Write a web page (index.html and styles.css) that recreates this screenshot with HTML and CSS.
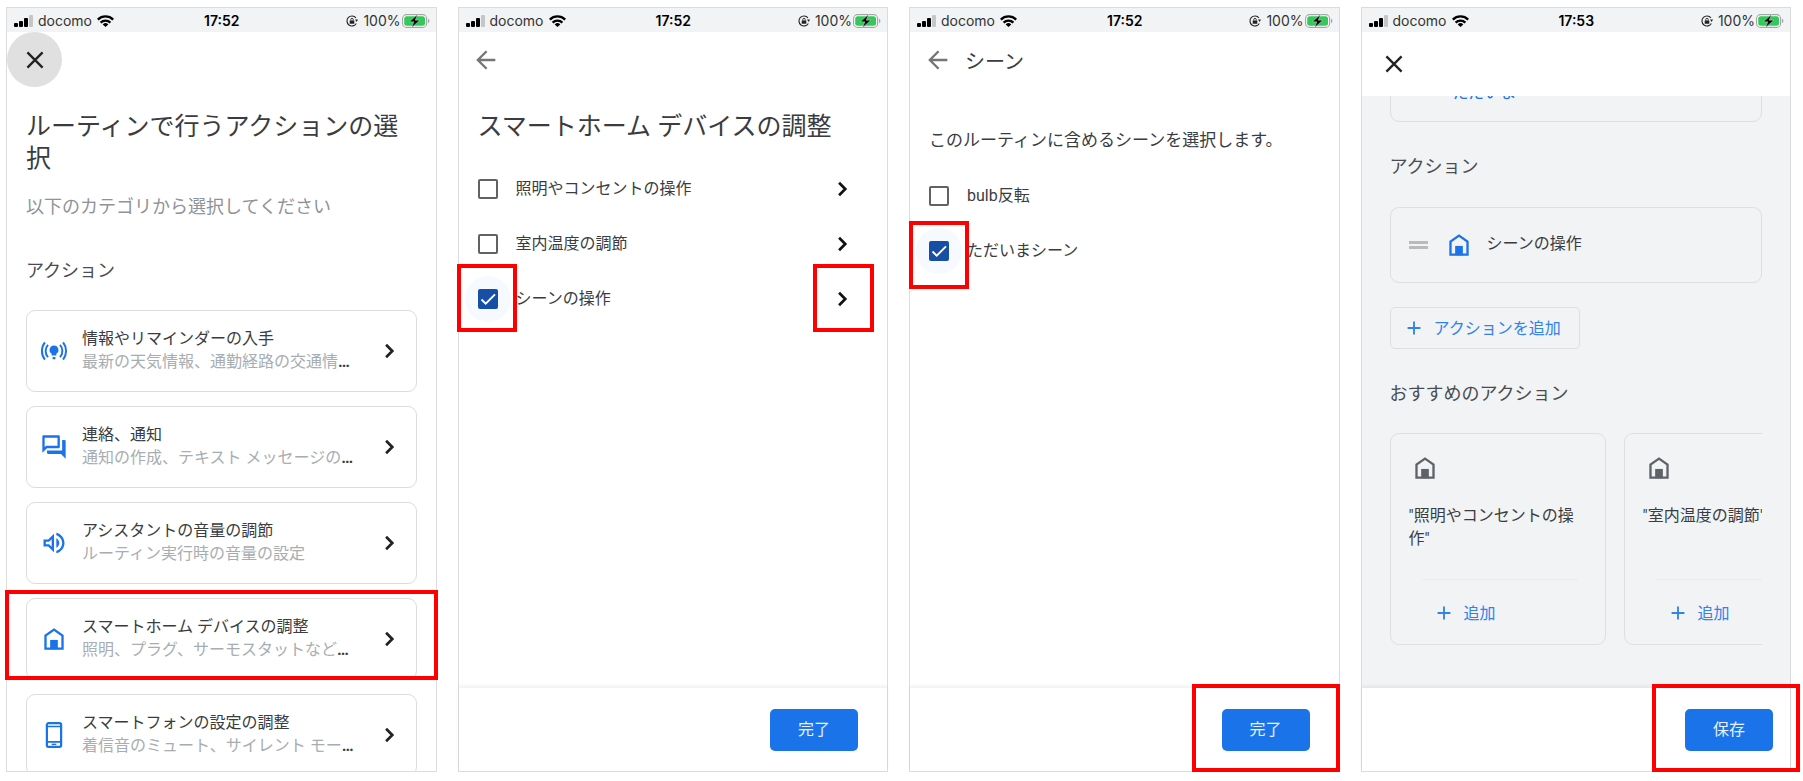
FILE: index.html
```html
<!DOCTYPE html>
<html lang="ja">
<head>
<meta charset="utf-8">
<title>ルーティンの設定</title>
<link rel="stylesheet" href="styles.css">
</head>
<body>
<svg class="defs" aria-hidden="true">
  <symbol id="signal" viewBox="0 0 19 12"><rect x="0" y="8" width="4" height="4" rx="1"/><rect x="5" y="6" width="4" height="6" rx="1"/><rect x="10" y="3" width="4" height="9" rx="1"/><rect x="15" y="0" width="4" height="12" rx="1" fill="#c4c6c8"/></symbol>
  <symbol id="wifi" viewBox="0 0 17 12"><g fill="none" stroke="#000" stroke-width="2.3"><path d="M.8 4.600a11 11 0 0 1 15.400 0"/><path d="M3.600 7.600a7 7 0 0 1 9.800 0"/></g><path d="M8.500 12 5.700 9.400a4 4 0 0 1 5.600 0z"/></symbol>
  <symbol id="lock" viewBox="0 0 12 12"><path d="M9.900 2.900A5 5 0 1 0 10.300 8.500" fill="none" stroke="#222" stroke-width="1.100"/><path d="M9 4.600h3L10.700 7z" fill="#222"/><rect x="3.700" y="5.400" width="4.600" height="3.400" rx=".4" fill="#222"/><path d="M4.800 5.600V4.500a1.200 1.200 0 0 1 2.400 0v1.100" fill="none" stroke="#222" stroke-width=".9"/></symbol>
  <symbol id="battery" viewBox="0 0 28 14"><rect x=".6" y=".6" width="24" height="12.800" rx="4" fill="#fff" stroke="#a3a5a7" stroke-width="1.100"/><rect x="2.200" y="2.200" width="20.800" height="9.600" rx="2.500" fill="#34c759"/><path d="M26 4.800a2.400 2.400 0 0 1 0 4.400z" fill="#a3a5a7"/><path d="M15.500.5 7.500 7.800h4.400L9.700 13.500l8-7.300h-4.500z" fill="#000" stroke="#f1f3f4" stroke-width=".4"/></symbol>
  <symbol id="close" viewBox="0 0 24 24"><path d="M5.500 5.500l13 13m0-13l-13 13" fill="none" stroke="currentColor" stroke-width="2"/></symbol>
  <symbol id="back" viewBox="0 0 24 24"><path d="M20 12H5m7.500-7.500L5 12l7.500 7.500" fill="none" stroke="currentColor" stroke-width="2"/></symbol>
  <symbol id="chevron" viewBox="0 0 24 24"><path d="M9.500 6.700 14.800 12l-5.300 5.300" fill="none" stroke="currentColor" stroke-width="2.300"/></symbol>
  <symbol id="plus" viewBox="0 0 24 24"><path d="M12 5v14M5 12h14" fill="none" stroke="currentColor" stroke-width="2"/></symbol>
  <symbol id="house" viewBox="0 0 24 24"><path d="M4.700 20.300V9L12 3.900 19.300 9v11.300z" fill="none" stroke="currentColor" stroke-width="2"/><path d="M8.700 12.800h6.600v8H8.700z" fill="currentColor"/></symbol>
  <symbol id="info" viewBox="0 0 24 24"><path d="M12 7.200a3.900 3.900 0 0 0-2 7.200v1.500h4v-1.500a3.900 3.900 0 0 0-2-7.200zM10.800 17.200h2.400v1.900h-2.400z" fill="currentColor"/><g fill="none" stroke="currentColor" stroke-width="1.700"><path d="M6.900 6.800a7.500 7.500 0 0 0 0 10.400M17.100 6.800a7.500 7.500 0 0 1 0 10.400M4.200 4.600a12 12 0 0 0 0 14.800M19.800 4.600a12 12 0 0 1 0 14.800"/></g></symbol>
  <symbol id="chat" viewBox="0 0 24 24"><path fill="currentColor" d="M15 4v7H5.170L4 12.170V4h11m1-2H3c-.55 0-1 .45-1 1v14l4-4h10c.55 0 1-.45 1-1V3c0-.55-.45-1-1-1zm5 4h-2v9H6v2c0 .55.45 1 1 1h11l4 4V7c0-.55-.45-1-1-1z"/></symbol>
  <symbol id="volume" viewBox="0 0 24 24"><path fill="currentColor" d="M3 9v6h4l5 5V4L7 9H3zm7-.17v6.340L7.830 13H5v-2h2.830L10 8.830zM16.500 12c0-1.770-1.020-3.290-2.500-4.030v8.050c1.480-.73 2.500-2.250 2.500-4.020zM14 3.230v2.060c2.890.86 5 3.540 5 6.710s-2.110 5.850-5 6.710v2.060c4.010-.91 7-4.490 7-8.770s-2.990-7.860-7-8.770z"/></symbol>
  <symbol id="mobile" viewBox="0 0 24 24"><rect x="5.900" y="1.900" width="12.200" height="20.200" rx="1.400" fill="none" stroke="currentColor" stroke-width="1.900"/><path d="M6 4.700h12M6 17.900h12" stroke="currentColor" stroke-width="1.400"/><path d="M10 20h4" stroke="currentColor" stroke-width="1.200"/></symbol>
  <symbol id="check" viewBox="0 0 20 20"><path d="M3.500 10.500l4.200 4.200L17 5.300" fill="none" stroke="#fff" stroke-width="1.900"/></symbol>
</svg>

<main class="phones">
  <section class="phone">
    <div class="status">
      <span class="carrier"><svg class="signal"><use href="#signal"/></svg>docomo<svg class="wifi"><use href="#wifi"/></svg></span>
      <time>17:52</time>
      <span class="power"><svg class="lock"><use href="#lock"/></svg><span>100%</span><svg class="battery"><use href="#battery"/></svg></span>
    </div>
    <header class="bar"><button class="nav pressed" aria-label="閉じる"><svg class="icon"><use href="#close"/></svg></button></header>
    <div class="content">
      <h1>ルーティンで行うアクションの選択</h1>
      <p class="lead">以下のカテゴリから選択してください</p>
      <h2>アクション</h2>
      <div class="cards">
        <button class="card"><svg class="icon"><use href="#info"/></svg><span class="words"><span class="name">情報やリマインダーの入手</span><span class="desc"><span>最新の天気情報、通勤経路の交通情報など</span></span></span><svg class="icon go"><use href="#chevron"/></svg></button>
        <button class="card"><svg class="icon"><use href="#chat"/></svg><span class="words"><span class="name">連絡、通知</span><span class="desc"><span>通知の作成、テキスト メッセージの送信など</span></span></span><svg class="icon go"><use href="#chevron"/></svg></button>
        <button class="card"><svg class="icon"><use href="#volume"/></svg><span class="words"><span class="name">アシスタントの音量の調節</span><span class="desc"><span>ルーティン実行時の音量の設定</span></span></span><svg class="icon go"><use href="#chevron"/></svg></button>
        <div class="marked">
          <button class="card"><svg class="icon"><use href="#house"/></svg><span class="words"><span class="name">スマートホーム デバイスの調整</span><span class="desc"><span>照明、プラグ、サーモスタットなどの調整</span></span></span><svg class="icon go"><use href="#chevron"/></svg></button>
        </div>
        <button class="card"><svg class="icon"><use href="#mobile"/></svg><span class="words"><span class="name">スマートフォンの設定の調整</span><span class="desc"><span>着信音のミュート、サイレント モードなど</span></span></span><svg class="icon go"><use href="#chevron"/></svg></button>
      </div>
    </div>
  </section>

  <section class="phone">
    <div class="status">
      <span class="carrier"><svg class="signal"><use href="#signal"/></svg>docomo<svg class="wifi"><use href="#wifi"/></svg></span>
      <time>17:52</time>
      <span class="power"><svg class="lock"><use href="#lock"/></svg><span>100%</span><svg class="battery"><use href="#battery"/></svg></span>
    </div>
    <header class="bar"><button class="nav back" aria-label="戻る"><svg class="icon"><use href="#back"/></svg></button></header>
    <div class="content">
      <h1>スマートホーム デバイスの調整</h1>
      <ul class="options">
        <li><span class="tick"><input type="checkbox" id="light"></span><label for="light">照明やコンセントの操作</label><button class="open" aria-label="照明やコンセントの操作を開く"><svg class="icon"><use href="#chevron"/></svg></button></li>
        <li><span class="tick"><input type="checkbox" id="temp"></span><label for="temp">室内温度の調節</label><button class="open" aria-label="室内温度の調節を開く"><svg class="icon"><use href="#chevron"/></svg></button></li>
        <li><span class="tick on"><input type="checkbox" id="scene" checked><svg><use href="#check"/></svg><i class="frame"></i></span><label for="scene">シーンの操作</label><button class="open" aria-label="シーンの操作を開く"><svg class="icon"><use href="#chevron"/></svg><i class="frame"></i></button></li>
      </ul>
    </div>
    <footer><button class="primary">完了</button></footer>
  </section>

  <section class="phone">
    <div class="status">
      <span class="carrier"><svg class="signal"><use href="#signal"/></svg>docomo<svg class="wifi"><use href="#wifi"/></svg></span>
      <time>17:52</time>
      <span class="power"><svg class="lock"><use href="#lock"/></svg><span>100%</span><svg class="battery"><use href="#battery"/></svg></span>
    </div>
    <header class="bar"><button class="nav back" aria-label="戻る"><svg class="icon"><use href="#back"/></svg></button><h1 class="small">シーン</h1></header>
    <div class="content">
      <p class="note">このルーティンに含めるシーンを選択します。</p>
      <ul class="options scenes">
        <li><span class="tick"><input type="checkbox" id="bulb"></span><label for="bulb">bulb反転</label></li>
        <li><span class="tick on"><input type="checkbox" id="home" checked><svg><use href="#check"/></svg><i class="frame"></i></span><label for="home">ただいまシーン</label></li>
      </ul>
    </div>
    <footer><button class="primary">完了</button><i class="frame"></i></footer>
  </section>

  <section class="phone summary">
    <div class="status">
      <span class="carrier"><svg class="signal"><use href="#signal"/></svg>docomo<svg class="wifi"><use href="#wifi"/></svg></span>
      <time>17:53</time>
      <span class="power"><svg class="lock"><use href="#lock"/></svg><span>100%</span><svg class="battery"><use href="#battery"/></svg></span>
    </div>
    <header class="bar"><button class="nav" aria-label="閉じる"><svg class="icon"><use href="#close"/></svg></button></header>
    <div class="content">
      <div class="starter"><a href="#">ただいま</a></div>
      <h2>アクション</h2>
      <div class="step"><span class="handle"></span><svg class="icon"><use href="#house"/></svg><span class="label">シーンの操作</span></div>
      <button class="add outlined"><svg><use href="#plus"/></svg>アクションを追加</button>
      <h2>おすすめのアクション</h2>
      <div class="suggestions">
        <article><svg class="icon"><use href="#house"/></svg><p>"照明やコンセントの操作"</p><hr><button class="add"><svg><use href="#plus"/></svg>追加</button></article>
        <article><svg class="icon"><use href="#house"/></svg><p>"室内温度の調節"</p><hr><button class="add"><svg><use href="#plus"/></svg>追加</button></article>
      </div>
    </div>
    <footer><button class="primary">保存</button><i class="frame"></i></footer>
  </section>
</main>
</body>
</html>
```
FILE: styles.css
```css
* { box-sizing: border-box; }

body {
  margin: 0;
  background: #fff;
  color: #3a3c40;
  font-family: Roboto, "Noto Sans CJK JP", sans-serif;
  font-size: 16px;
  line-height: 23px;
}

button {
  padding: 0;
  border: 0;
  background: none;
  color: inherit;
  font: inherit;
  text-align: left;
}

h1, h2, p, ul { margin: 0; padding: 0; font-weight: 400; }
svg { display: block; flex: none; }
.defs { position: absolute; width: 0; height: 0; }
.icon { width: 28px; height: 28px; }

.phones {
  display: grid;
  grid-template-columns: repeat(4, minmax(0, 1fr));
  gap: 21px;
  height: 100vh;
  min-height: 480px;
  padding: 7px 12px 9px 6px;
}

.phone {
  display: flex;
  flex-direction: column;
  min-height: 0;
  border: 1px solid #dadcde;
}

/* Status bar */
.status {
  display: grid;
  grid-template-columns: 1fr auto 1fr;
  align-items: center;
  flex: none;
  height: 24px;
  padding: 2px 6px 0 7px;
  background: #f1f3f4;
  color: #333;
  font: 14px/22px Inter, sans-serif;
}
.status time { color: #000; font-weight: 600; }
.carrier, .power { display: flex; align-items: center; }
.carrier { gap: 5px; }
.power { justify-content: flex-end; gap: 1px; }
.signal { width: 19px; height: 12px; }
.wifi { width: 17px; height: 12px; }
.lock { width: 12px; height: 12px; margin-right: 4px; }
.battery { width: 28px; height: 14px; }

/* Header */
.bar { display: flex; align-items: center; flex: none; height: 55px; }
.nav {
  display: grid;
  place-items: center;
  width: 55px;
  height: 55px;
  border-radius: 50%;
  color: #222;
}
.nav.pressed { background: #e0e0e0; }
.nav.back { color: #757575; }

.content { flex: 1; min-height: 0; padding: 0 19px; overflow: hidden; }
h1 { margin-top: 24px; font-size: 25px; line-height: 32px; }
h1.small { margin: 0; padding-top: 4px; font-size: 20px; }
h2 { color: #4a4c4f; font-size: 18px; line-height: 24px; }
.lead { margin: 20px 0 40px; color: #8f9398; font-size: 18px; line-height: 24px; }

/* Category cards */
.cards { display: grid; gap: 14px; margin-top: 27px; }
.card {
  display: flex;
  align-items: center;
  width: 100%;
  height: 82px;
  padding: 0 13px;
  border: 1px solid #dadce0;
  border-radius: 9px;
  color: #1a73e8;
}
.words { display: grid; flex: 1; min-width: 0; margin: 0 12px 2px 14px; color: #3a3c40; }
.desc { overflow: hidden; text-overflow: ellipsis; white-space: nowrap; font-weight: 700; }
.desc span { color: #a8adb2; font-weight: 400; }
.go { color: #222; }
.marked { position: relative; }
.marked::after {
  content: "";
  position: absolute;
  inset: -8px -21px 0;
  border: 4px solid #f00;
}
.phone:first-child .content { margin: 0 -2px; padding: 0 21px; }

/* Check list */
.options { margin-top: 18px; list-style: none; }
.options.scenes { margin-top: 16px; }
.options li { display: flex; align-items: center; height: 55px; }
.options label { flex: 1; margin-left: 18px; }
.tick { position: relative; width: 20px; height: 20px; }
.tick input {
  display: block;
  position: relative;
  width: 20px;
  height: 20px;
  margin: 0;
  border: 2px solid #5f6368;
  border-radius: 2px;
  appearance: none;
}
.tick input:checked { border-color: #174ea6; background: #174ea6; }
.tick svg { position: absolute; inset: 0; width: 20px; height: 20px; }
.tick.on::before {
  content: "";
  position: absolute;
  inset: -13px;
  border-radius: 50%;
  background: #f6f9fe;
}
.open { position: relative; margin-right: 12px; color: #111; }
.note { margin-top: 41px; font-size: 17px; line-height: 24px; }

/* Red call-outs */
.frame { position: absolute; z-index: 1; border: 4px solid #f00; }
.tick .frame { inset: -25px -19px -23px -21px; }
.scenes .tick .frame { inset: -20px -20px -28px; }
.open .frame { inset: -21px -18px -19px -15px; }
.phone:nth-child(2) .content, .phone:nth-child(3) .content { overflow: visible; }
footer .frame { inset: -4px -1px -1px auto; width: 148px; }

/* Footer */
footer {
  display: flex;
  position: relative;
  justify-content: flex-end;
  flex: none;
  height: 83px;
  padding: 21px 29px 0 0;
  background: #fff;
  box-shadow: 0 -2px 3px rgb(60 64 67 / 8%);
}
.primary {
  width: 88px;
  height: 42px;
  padding-bottom: 2px;
  border-radius: 5px;
  background: #1a73e8;
  color: #e8f1fd;
  text-align: center;
}

/* Routine summary */
.summary { background: #f1f3f4; }
.summary .bar { height: 64px; padding-left: 5px; background: #fff; }
.summary .content { padding: 0 28px; }
.starter, .step, .outlined, article { border: 1px solid #dddfe1; border-radius: 9px; }
.starter { height: 76px; margin: -50px 0 33px; padding: 34px 0 0 62px; }
.starter a { color: #1a73e8; text-decoration: none; }
.step {
  display: flex;
  align-items: center;
  height: 76px;
  margin: 28px 0 24px;
  padding-left: 18px;
}
.step .icon { margin: 0 14px 0 17px; color: #1a73e8; }
.step .label { padding-bottom: 3px; }
.handle { width: 19px; height: 8px; border: solid #b8babc; border-width: 3px 0; }
.add { display: flex; align-items: center; gap: 9px; height: 42px; color: #3182ea; }
.add svg { width: 22px; height: 22px; }
.outlined { margin-bottom: 33px; padding: 0 18px 0 12px; border-radius: 5px; }
.suggestions { display: flex; gap: 18px; margin-top: 27px; overflow: hidden; }
article { flex: none; width: 216px; height: 212px; padding: 20px 18px 0; }
article .icon { margin: 0 0 22px 2px; color: #5f6368; }
article p { min-height: 46px; }
article hr { margin: 29px 9px 12px 12px; border: 0; border-top: 1px solid #eaecee; }
article .add { margin-left: 24px; }
.summary footer { padding-right: 17px; }
.summary footer .frame { right: -10px; }
```
